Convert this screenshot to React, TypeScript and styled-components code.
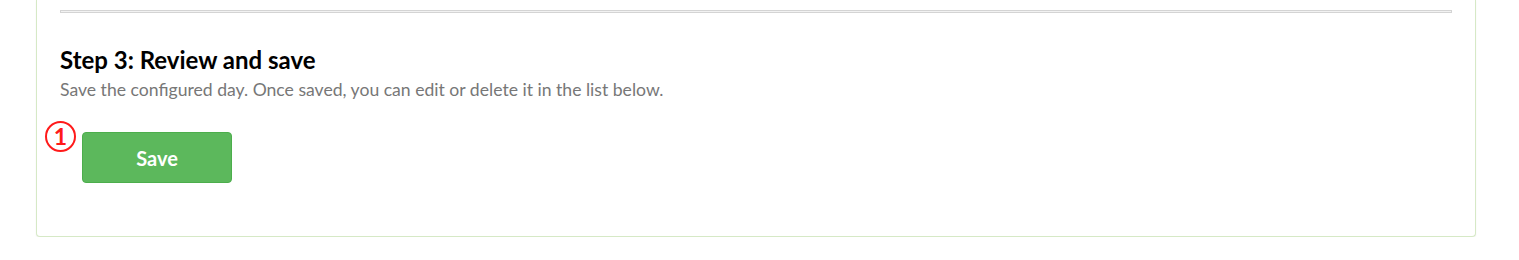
import React from "react";
import styled, { createGlobalStyle } from "styled-components";

const Global = createGlobalStyle`
  html, body {
    margin: 0;
    padding: 0;
    background: #ffffff;
    font-family: Lato, "Open Sans", Arial, sans-serif;
  }
`;

const Page = styled.div`
  padding: 0 43px 0 36px;
  background: #ffffff;
`;

const Card = styled.section`
  border: 1px solid #d6e9c6;
  border-top: 0;
  border-radius: 0 0 4px 4px;
  box-shadow: 0 1px 2px rgba(0, 0, 0, 0.06);
  padding: 10px 23px 53px 23px;
  background: #ffffff;
`;

const Divider = styled.div`
  height: 1px;
  border: 1px solid #d4d4d4;
  background: #f2f2f2;
  margin: 0 0 32px 0;
`;

const Title = styled.h3`
  margin: 0;
  font-size: 24px;
  line-height: 30px;
  font-weight: 700;
  color: #000000;
`;

const Hint = styled.p`
  margin: 4px 0 0 0;
  font-size: 17.6px;
  line-height: 22px;
  color: #777777;
`;

const Actions = styled.div`
  position: relative;
  display: flex;
  margin-top: 31px;
  padding-left: 22px;
`;

const Marker = styled.span`
  position: absolute;
  left: -15px;
  top: -11px;
  width: 31px;
  height: 31px;
  box-sizing: border-box;
  border: 2px solid #ff1a1a;
  border-radius: 50%;
  color: #ff1a1a;
  font-weight: 700;
  font-size: 23px;
  line-height: 27px;
  text-align: center;
  background: #ffffff;
`;

const SaveButton = styled.button`
  width: 150px;
  height: 51px;
  border: 1px solid #4cae4c;
  border-radius: 4px;
  background: #5cb85c;
  color: #ffffff;
  font-family: Lato, "Open Sans", Arial, sans-serif;
  font-size: 20px;
  font-weight: 700;
  cursor: pointer;
`;

export default function App() {
  return (
    <>
      <Global />
      <Page>
        <Card>
          <Divider />
          <Title>Step 3: Review and save</Title>
          <Hint>
            Save the configured day. Once saved, you can edit or delete it in the list below.
          </Hint>
          <Actions>
            <Marker>1</Marker>
            <SaveButton type="button">Save</SaveButton>
          </Actions>
        </Card>
      </Page>
    </>
  );
}
